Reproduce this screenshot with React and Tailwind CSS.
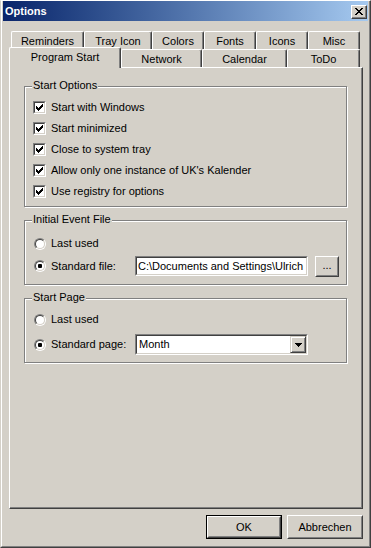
import React from "react";

const FONT = "font-['Liberation_Sans',Arial,sans-serif]";

function Check() {
  return (
    <div className="w-[13px] h-[13px] shrink-0 border border-t-[#808080] border-l-[#808080] border-r-white border-b-white">
      <div className="w-full h-full border border-t-[#404040] border-l-[#404040] border-r-[#d4d0c8] border-b-[#d4d0c8] bg-white flex items-center justify-center">
        <svg width="7" height="7" viewBox="0 0 7 7" shapeRendering="crispEdges">
          <path
            d="M6 0h1v1H6z M5 1h2v1H5z M0 2h1v1H0z M4 2h3v1H4z M0 3h2v1H0z M3 3h3v1H3z M0 4h5v1H0z M1 5h3v1H1z M2 6h1v1H2z"
            fill="#000"
          />
        </svg>
      </div>
    </div>
  );
}

function Radio({ on }) {
  return (
    <div className="w-[12px] h-[12px] shrink-0 rounded-full border border-t-[#808080] border-l-[#808080] border-r-white border-b-white">
      <div className="w-full h-full rounded-full border border-t-[#404040] border-l-[#404040] border-r-[#d4d0c8] border-b-[#d4d0c8] bg-white flex items-center justify-center">
        {on && <div className="w-[4px] h-[4px] rounded-[1px] bg-black" />}
      </div>
    </div>
  );
}

function CheckRow({ label }) {
  return (
    <div className="flex items-center h-[13px] gap-[5px]">
      <Check />
      <span className="leading-[13px] whitespace-nowrap">{label}</span>
    </div>
  );
}

function GroupBox({ title, className, children }) {
  return (
    <div
      className={
        "relative ml-[14px] w-[323px] border border-[#808080] shadow-[1px_1px_0_0_#ffffff,inset_1px_1px_0_0_#ffffff] " +
        className
      }
    >
      <span className="absolute left-[7px] -top-[8px] px-[1px] bg-[#d4d0c8] leading-[13px] whitespace-nowrap">
        {title}
      </span>
      {children}
    </div>
  );
}

function BackTab({ w, label }) {
  return (
    <div
      className="h-[18px] flex items-center justify-center pt-[2px] border-l border-t border-r border-l-white border-t-white border-r-[#404040] rounded-t-[2px] shadow-[inset_-1px_0_0_0_#808080] whitespace-nowrap"
      style={{ width: w }}
    >
      {label}
    </div>
  );
}

function RaisedInner({ children, className = "" }) {
  return (
    <div className={"border border-t-white border-l-white border-r-[#404040] border-b-[#404040] " + className}>
      <div className="w-full h-full border border-t-[#d4d0c8] border-l-[#d4d0c8] border-r-[#808080] border-b-[#808080] flex items-center justify-center">
        {children}
      </div>
    </div>
  );
}

export default function App() {
  return (
    <div className={"w-[371px] h-[548px] bg-[#d4d0c8] text-[11px] text-black " + FONT}>
      <div className="w-full h-full border border-t-white border-l-[#d4d0c8] border-r-[#404040] border-b-[#404040]">
        <div className="w-full h-full border-l border-r border-b border-l-white border-r-[#808080] border-b-[#808080] px-px pb-px flex flex-col">
          {/* Title bar */}
          <div className="h-[20px] flex items-start justify-between bg-linear-to-r from-[#0a246a] to-[#a6caf0]">
            <span className="pl-[2px] pt-[4px] leading-[13px] font-bold text-white">Options</span>
            <div className="mt-[4px] mr-[1px] w-[16px] h-[14px] bg-[#d4d0c8] border border-t-white border-l-white border-r-[#404040] border-b-[#404040] shadow-[inset_-1px_-1px_0_0_#808080] flex items-center justify-center">
              <svg width="8" height="7" viewBox="0 0 8 7" shapeRendering="crispEdges" className="-mt-px -ml-px">
                <path
                  d="M0 0h2v1H0z M6 0h2v1H6z M1 1h2v1H1z M5 1h2v1H5z M2 2h4v1H2z M3 3h2v1H3z M2 4h4v1H2z M1 5h2v1H1z M5 5h2v1H5z M0 6h2v1H0z M6 6h2v1H6z"
                  fill="#000"
                />
              </svg>
            </div>
          </div>

          {/* Tabs back row */}
          <div className="mt-[10px] ml-[8px] flex h-[18px]">
            <BackTab w={73} label="Reminders" />
            <BackTab w={68} label="Tray Icon" />
            <BackTab w={52} label="Colors" />
            <BackTab w={52} label="Fonts" />
            <BackTab w={52} label="Icons" />
            <BackTab w={52} label="Misc" />
          </div>

          {/* Tabs front row */}
          <div className="ml-[6px] flex items-end h-[18px]">
            <div className="relative z-10 w-[112px] h-[21px] -mb-px bg-[#d4d0c8] flex items-center justify-center pb-[1px] border-l border-t border-r border-l-white border-t-white border-r-[#404040] rounded-t-[2px] shadow-[inset_-1px_0_0_0_#808080] whitespace-nowrap">
              Program Start
            </div>
            <BackTab w={81} label="Network" />
            <BackTab w={85} label="Calendar" />
            <BackTab w={73} label="ToDo" />
          </div>

          {/* Panel */}
          <div className="ml-[6px] w-[354px] h-[442px] border border-t-white border-l-white border-r-[#404040] border-b-[#404040] shadow-[inset_-1px_-1px_0_0_#808080] pt-[18px] flex flex-col">
            <GroupBox title="Start Options" className="pt-[14px] pb-[8px] pl-[8px]">
              <div className="flex flex-col gap-[8px]">
                <CheckRow label="Start with Windows" />
                <CheckRow label="Start minimized" />
                <CheckRow label="Close to system tray" />
                <CheckRow label="Allow only one instance of UK's Kalender" />
                <CheckRow label="Use registry for options" />
              </div>
            </GroupBox>

            <GroupBox title="Initial Event File" className="mt-[13px] pt-[16px] pb-[7px] pl-[9px]">
              <div className="flex items-center h-[13px] gap-[5px]">
                <Radio />
                <span className="leading-[13px]">Last used</span>
              </div>
              <div className="mt-[6px] flex items-start h-[21px]">
                <div className="flex items-center h-[20px] gap-[5px]">
                  <Radio on />
                  <span className="w-[84px] leading-[13px] whitespace-nowrap">Standard file:</span>
                </div>
                <div className="w-[173px] h-[20px] border border-t-[#808080] border-l-[#808080] border-r-white border-b-white">
                  <div className="w-full h-full border border-t-[#404040] border-l-[#404040] border-r-[#d4d0c8] border-b-[#d4d0c8] bg-white flex items-center pl-[1px] overflow-hidden">
                    <span className="leading-[13px] whitespace-nowrap">C:\Documents and Settings\Ulrich</span>
                  </div>
                </div>
                <RaisedInner className="ml-[7px] w-[24px] h-[21px] bg-[#d4d0c8]">
                  <span className="leading-[13px] -mt-[2px]">...</span>
                </RaisedInner>
              </div>
            </GroupBox>

            <GroupBox title="Start Page" className="mt-[13px] pt-[14px] pb-[7px] pl-[9px]">
              <div className="flex items-center h-[13px] gap-[5px]">
                <Radio />
                <span className="leading-[13px]">Last used</span>
              </div>
              <div className="mt-[8px] flex items-center h-[21px]">
                <div className="flex items-center gap-[5px]">
                  <Radio on />
                  <span className="w-[84px] leading-[13px] whitespace-nowrap">Standard page:</span>
                </div>
                <div className="w-[173px] h-[21px] border border-t-[#808080] border-l-[#808080] border-r-white border-b-white">
                  <div className="w-full h-full border border-t-[#404040] border-l-[#404040] border-r-[#d4d0c8] border-b-[#d4d0c8] bg-white flex items-center">
                    <span className="flex-1 pl-[2px] leading-[13px]">Month</span>
                    <div className="w-[16px] h-full bg-[#d4d0c8] border border-t-[#d4d0c8] border-l-[#d4d0c8] border-r-[#404040] border-b-[#404040] shadow-[inset_1px_1px_0_0_#ffffff,inset_-1px_-1px_0_0_#808080] flex items-center justify-center">
                      <svg width="7" height="4" viewBox="0 0 7 4" shapeRendering="crispEdges">
                        <path d="M0 0h7v1H0z M1 1h5v1H1z M2 2h3v1H2z M3 3h1v1H3z" fill="#000" />
                      </svg>
                    </div>
                  </div>
                </div>
              </div>
            </GroupBox>
          </div>

          {/* Buttons */}
          <div className="mt-[6px] flex justify-end gap-[5px] pr-[5px]">
            <div className="w-[76px] h-[24px] border border-black">
              <RaisedInner className="w-full h-full">
                <span className="leading-[13px]">OK</span>
              </RaisedInner>
            </div>
            <RaisedInner className="w-[76px] h-[24px]">
              <span className="leading-[13px]">Abbrechen</span>
            </RaisedInner>
          </div>
        </div>
      </div>
    </div>
  );
}
